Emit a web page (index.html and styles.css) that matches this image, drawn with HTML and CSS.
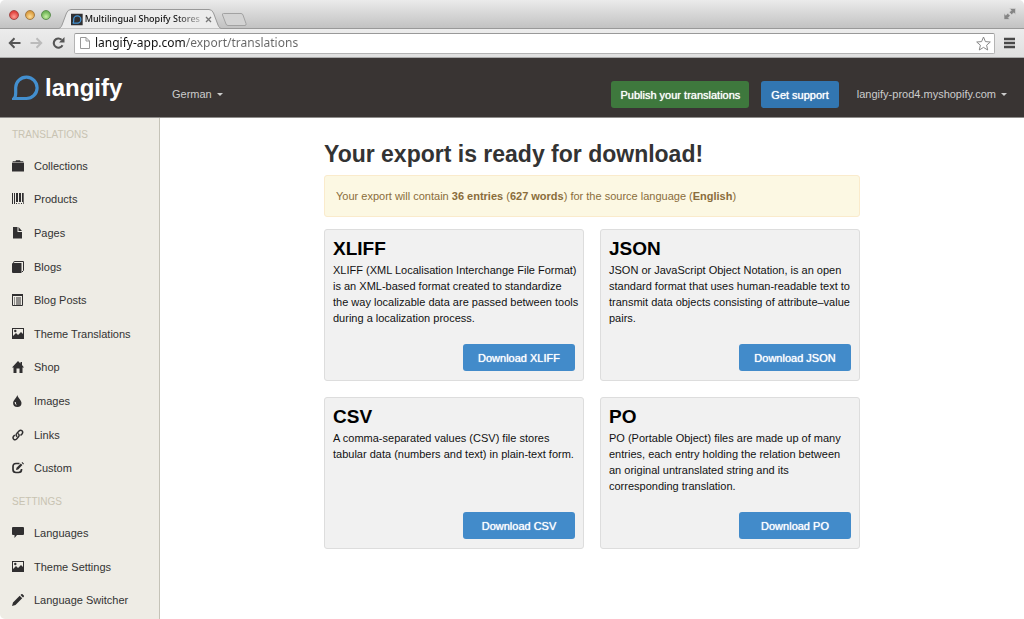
FILE: index.html
```html
<!DOCTYPE html>
<html lang="en">
<head>
<meta charset="utf-8">
<title>Multilingual Shopify Stores</title>
<link rel="stylesheet" href="styles.css">
</head>
<body>
<svg class="sprite" aria-hidden="true">
  <symbol id="i-image" viewBox="0 0 12 12"><path fill-rule="evenodd" d="M0 0h12v11H0zM1 1v7l3-3 2 2 3-3 2 2V1z"/><circle cx="3.300" cy="3" r="1.200"/></symbol>
</svg>
<div class="window">
  <div class="tabstrip">
    <div class="lights">
      <button class="light red" aria-label="Close"></button>
      <button class="light amber" aria-label="Minimize"></button>
      <button class="light green" aria-label="Zoom"></button>
    </div>
    <div class="tab">
      <svg class="tab-shape" viewBox="0 0 166 20" preserveAspectRatio="none"><path d="M0 20C3 19.500 4 18.500 5 16L9.500 4Q11 .5 14 .5H152Q155 .5 156.500 4L161 16C162 18.500 163 19.500 166 20Z" fill="#ececec" stroke="#999"/></svg>
      <svg class="favicon" viewBox="0 0 13 13"><path d="M0 0h13v13H0z" fill="#302f30"/><path d="M2 10.500Q3 10 3 8V6.500a4 4 0 1 1 4 4Z" fill="none" stroke="#4293d4" stroke-width="1.400"/></svg>
      <span class="tab-title">Multilingual Shopify Stores</span>
      <button class="tab-close" aria-label="Close tab"><svg viewBox="0 0 7 7"><path d="M1 1l5 5M6 1L1 6" stroke="#777" stroke-width="1.300"/></svg></button>
    </div>
    <button class="new-tab" aria-label="New tab"><svg viewBox="0 0 26 13"><path d="M2.500 .5H20Q21.500 .5 22 2L25 10.500Q25.500 12.500 24 12.500H7Q5.500 12.500 5 11L1.500 2Q1 .5 2.500 .5Z" fill="#d3d3d3" stroke="#a2a2a2"/></svg></button>
    <button class="expand" aria-label="Full screen"><svg viewBox="0 0 12 12"><path d="M5.500 .5h6v6L9.700 4.700 7.700 6.700 5.300 4.300 7.300 2.300zM6 11.500H0V5.500L1.800 7.300 3.800 5.300 6.200 7.700 4.200 9.700z" fill="#858585" stroke="#d6d6d6" stroke-width=".6"/></svg></button>
  </div>
  <div class="toolbar">
    <button class="tool" aria-label="Back"><svg viewBox="0 0 13 12"><path d="M12.500 6H2M6.500 1.300L1.800 6l4.700 4.700" fill="none" stroke="#555" stroke-width="2"/></svg></button>
    <button class="tool" aria-label="Forward"><svg viewBox="0 0 13 12"><path d="M.5 6H11M6.500 1.300L11.200 6l-4.700 4.700" fill="none" stroke="#bbb" stroke-width="2"/></svg></button>
    <button class="tool" aria-label="Reload"><svg viewBox="0 0 13 12"><path d="M10.500 8.200A4.600 4.600 0 1 1 9.600 2.800" fill="none" stroke="#555" stroke-width="2.100"/><path d="M12.500 0v5.500H7z" fill="#555"/></svg></button>
    <div class="omnibox">
      <svg class="page-icon" viewBox="0 0 10 12"><path d="M.5 .5h5.500l3.500 3.500v7.500H.5zM6 .5V4h3.500" fill="#fff" stroke="#999"/></svg>
      <input class="url" type="text" aria-label="Address" value="langify-app.com/export/translations">
      <button class="star" aria-label="Bookmark"><svg viewBox="0 0 15 15"><path d="M7.500 1l1.900 4.600 4.900.4-3.700 3.200 1.100 4.800-4.200-2.600L3.300 14l1.100-4.800L.7 6l4.900-.4z" fill="#fff" stroke="#888"/></svg></button>
    </div>
    <button class="menu" aria-label="Menu"><svg viewBox="0 0 11 12"><path d="M0 2h11M0 6h11M0 10h11" stroke="#484848" stroke-width="2.400"/></svg></button>
  </div>

  <header class="header">
    <a class="logo" href="#">
      <svg viewBox="0 0 27 26"><path d="M2 23.500Q3.700 22 3.700 18V12.500A10.700 10.700 0 1 1 14.400 23.500Z" fill="none" stroke="#438fcf" stroke-width="3.200"/></svg>
      <span>langify</span>
    </a>
    <button class="dropdown language">German <i class="caret"></i></button>
    <div class="header-actions">
      <a class="btn btn-green" href="#">Publish your translations</a>
      <a class="btn btn-blue" href="#">Get support</a>
      <button class="dropdown shop">langify-prod4.myshopify.com <i class="caret"></i></button>
    </div>
  </header>

  <div class="body">
    <nav class="sidebar">
      <h2>TRANSLATIONS</h2>
      <a href="#"><svg viewBox="0 0 12 12"><path d="M0 3h12v8.500H0zM0 2.400L1 1.300h2.500L4 .3h4l.5 1H11l1 1.100z"/></svg>Collections</a>
      <a href="#"><svg viewBox="0 0 12 12"><path d="M0 0h1v11H0zM2 0h1v11H2zM4 0h2v9H4zM7 0h2v9H7zM10 0h1v9h-1zM11.300 0h.7v11h-.7zM4 10h1v1H4zM6.500 10h1v1h-1zM9 10h1v1H9z"/></svg>Products</a>
      <a href="#"><svg viewBox="0 0 12 12"><path d="M1 0h4.500v5H10v6.500H1zM6.500 0L10 4H6.500z"/></svg>Pages</a>
      <a href="#"><svg viewBox="0 0 12 12"><path d="M1 2h8.500v10H1Q0 12 0 11V3Q0 2 1 2z"/><path d="M1 1.700Q2 .5 3 .5h8.500v9L10 11" fill="none" stroke="#302f30"/></svg>Blogs</a>
      <a href="#"><svg viewBox="0 0 12 12"><path d="M.5 .5h10v11H.5z" fill="none" stroke="#302f30"/><path d="M0 0h11v2H0zM2 3.500h1v1H2zM4 3.500h5v1H4zM2 5.500h1v1H2zM4 5.500h5v1H4zM2 7.500h1v1H2zM4 7.500h5v1H4zM2 9.500h1v1H2zM4 9.500h5v1H4z"/></svg>Blog Posts</a>
      <a href="#"><svg viewBox="0 0 12 12"><use href="#i-image"/></svg>Theme Translations</a>
      <a href="#"><svg viewBox="0 0 12 12"><path d="M6 0l2.500 2.500V1H10v3l2 2.500h-1.500V12h-3V7.500h-3V12h-3V6.500H0z"/></svg>Shop</a>
      <a href="#"><svg viewBox="0 0 12 12"><path fill-rule="evenodd" d="M5.300 0C5.800 3 9.500 5 9.500 8a4.200 4 0 0 1-8.400 0C1.100 5 4.800 3 5.300 0zM2.600 7Q2.500 9.800 5 10.500 3.800 9 3.800 7z"/></svg>Images</a>
      <a href="#"><svg viewBox="0 0 12 12"><g fill="none" stroke="#302f30" stroke-width="1.500"><path d="M5.200 7.800Q3.300 6 4.800 4.500L7 2Q8.600 .5 10 1.800T10 5L8.500 6.500"/><path d="M6 4.500Q8 6 6.500 7.800L4.600 10Q3 11.500 1.700 10.200T1.600 7.300L2.800 6"/></g></svg>Links</a>
      <a href="#"><svg viewBox="0 0 12 12"><path d="M7.500 1.500H4Q1 1.500 1 4.500v3Q1 10.500 4 10.500h2.500q3 0 3-3V7" fill="none" stroke="#302f30" stroke-width="1.700"/><path d="M4 8l.5-2.200L8.800 1.500l1.600 1.600-4.200 4.300zM9.600 .7l.7-.7 1.700 1.700-.8.8z"/></svg>Custom</a>
      <h2>SETTINGS</h2>
      <a href="#"><svg viewBox="0 0 12 12"><path d="M1 0h10q1 0 1 1v6q0 1-1 1H5L2.500 11V8H1Q0 8 0 7V1Q0 0 1 0z"/></svg>Languages</a>
      <a href="#"><svg viewBox="0 0 12 12"><use href="#i-image"/></svg>Theme Settings</a>
      <a href="#"><svg viewBox="0 0 12 12"><path d="M0 12l1-3.500L7.700 1.800l2.500 2.500L3.500 11zM8.500 1l.8-.8q.7-.5 1.300.1l1.200 1.200q.5.600 0 1.200l-.8.800z"/></svg>Language Switcher</a>
    </nav>
    <main class="main">
      <div class="content">
        <h1>Your export is ready for download!</h1>
        <p class="alert">Your export will contain <b>36 entries</b> (<b>627 words</b>) for the source language (<b>English</b>)</p>
        <div class="cards">
          <section class="card card-wide-text">
            <h3>XLIFF</h3>
            <p>XLIFF (XML Localisation Interchange File Format)<br>is an XML-based format created to standardize<br>the way localizable data are passed between tools<br>during a localization process.</p>
            <a class="download" href="#">Download XLIFF</a>
          </section>
          <section class="card">
            <h3>JSON</h3>
            <p>JSON or JavaScript Object Notation, is an open standard format that uses human-readable text to transmit data objects consisting of attribute–value pairs.</p>
            <a class="download" href="#">Download JSON</a>
          </section>
          <section class="card">
            <h3>CSV</h3>
            <p>A comma-separated values (CSV) file stores tabular data (numbers and text) in plain-text form.</p>
            <a class="download" href="#">Download CSV</a>
          </section>
          <section class="card">
            <h3>PO</h3>
            <p>PO (Portable Object) files are made up of many entries, each entry holding the relation between an original untranslated string and its corresponding translation.</p>
            <a class="download" href="#">Download PO</a>
          </section>
        </div>
      </div>
    </main>
  </div>
</div>
</body>
</html>
```

FILE: styles.css
```css
* { box-sizing: border-box; }
body { margin: 0; background: #fff; font: 11px/16px "Liberation Sans", Arial, sans-serif; color: #333; }
h1, h2, h3, p { margin: 0; }
a { color: inherit; text-decoration: none; }
button { display: flex; align-items: center; padding: 0; border: 0; background: none; font: inherit; color: inherit; cursor: pointer; }
svg { display: block; }
.sprite { position: absolute; width: 0; height: 0; }

.window { display: flex; flex-direction: column; min-height: 100vh; border-radius: 5px; overflow: hidden; }

/* Browser frame */
.tabstrip { display: flex; align-items: flex-end; height: 29px; padding: 0 8px 0 9px; background: linear-gradient(#ebebeb, #c2c2c2); border-bottom: 1px solid #999; }
.lights { display: flex; gap: 6px; align-self: center; padding-top: 2px; }
.light { width: 10px; height: 10px; border: 1px solid #806060; border-radius: 50%; }
.red { background: radial-gradient(circle at 50% 70%, #ff9d94, #e0413d 70%); border-color: #a44846; }
.amber { background: radial-gradient(circle at 50% 70%, #ffdd96, #d99b3e 70%); border-color: #a27a45; }
.green { background: radial-gradient(circle at 50% 70%, #c8f0a4, #6fb457 70%); border-color: #5d8f50; }
.tab { position: relative; display: flex; align-items: center; width: 166px; height: 20px; margin: 0 0 -1px 6px; padding: 0 11px 0 14px; }
.tab-shape { position: absolute; inset: 0; width: 100%; height: 100%; }
.favicon { position: relative; width: 13px; height: 13px; }
.tab-title { position: relative; flex: 1; margin: 0 5px 0 2px; white-space: nowrap; font: 500 9px/16px "Noto Sans", "Open Sans", sans-serif; color: #111; mask-image: linear-gradient(90deg, #000 78%, #0004); }
.tab-close { position: relative; }
.tab-close svg { width: 7px; height: 7px; }
.new-tab { margin-bottom: 2px; margin-left: -2px; }
.new-tab svg { width: 26px; height: 13px; }
.expand { align-self: center; margin-left: auto; }
.expand svg { width: 12px; height: 12px; }
.toolbar { display: flex; align-items: center; gap: 9px; height: 29px; padding: 0 9px 0 8px; background: linear-gradient(#ececec, #e0e0e0); border-bottom: 1px solid #aaa; }
.tool svg { width: 13px; height: 12px; }
.omnibox { display: flex; flex: 1; align-items: center; height: 21px; padding: 0 3px 0 5px; border: 1px solid #b4b4b4; border-top-color: #999; border-radius: 2px; background: #fff; }
.page-icon { width: 10px; height: 12px; }
.url { flex: 1; min-width: 0; height: 18px; margin-left: 5px; padding: 0; border: 0; outline: 0; font: 12px/18px "Noto Sans", "Open Sans", sans-serif; color: #222; background: linear-gradient(90deg, #111 90px, #666 90px) text; -webkit-text-fill-color: transparent; }
.star svg { width: 15px; height: 15px; }
.menu svg { width: 11px; height: 12px; }

/* Application header */
.header { display: flex; align-items: center; height: 60px; padding: 13px 17px 0 12px; background: #393433; border-bottom: 1px solid #8f8d8b; color: #ccc; }
.logo { display: flex; align-items: center; gap: 6px; width: 160px; padding-bottom: 12px; color: #fff; font-size: 24px; line-height: 28px; font-weight: bold; }
.logo svg { width: 27px; height: 26px; }
.dropdown { gap: 5px; white-space: nowrap; }
.caret { border: 3px solid transparent; border-top-color: currentColor; border-bottom: 0; }
.header-actions { display: flex; align-items: center; gap: 12px; margin-left: auto; }
.btn { padding: 6px 9px 5px; border-radius: 3px; color: #fff; white-space: nowrap; text-shadow: 0 0 1px #fff; }
.btn-green { background: #3e783d; }
.btn-blue { padding-left: 10px; padding-right: 10px; background: #3276b1; }
.shop { margin-left: 6px; }

/* Page body */
.body { display: flex; flex: 1; }
.sidebar { display: flex; flex-direction: column; width: 160px; padding-bottom: 2px; background: #eeece5; border-right: 1px solid #c5c3b8; }
.sidebar h2 { height: 31px; padding: 1px 0 0 12px; font-size: 10px; line-height: 31px; font-weight: normal; color: #c8c3b2; }
.sidebar a { display: flex; flex: 1 0 auto; align-items: center; gap: 10px; padding-left: 12px; color: #333; }
.sidebar svg { width: 12px; height: 12px; fill: #302f30; }
.main { flex: 1; padding: 20px 16px; }
.content { max-width: 536px; margin: 0 auto; }
h1 { font-size: 23px; line-height: 32px; }
.alert { margin: 5px 0 12px; padding: 12px 11px; border: 1px solid #faebcc; border-radius: 3px; background: #fcf8e3; color: #8a6d3b; }
.cards { display: grid; grid-template-columns: repeat(2, 1fr); gap: 16px; }
.card { display: flex; flex-direction: column; min-height: 152px; padding: 7px 8px 9px; border: 1px solid #ddd; border-radius: 3px; background: #f1f1f1; color: #111; }
.card h3 { margin-bottom: 1px; font-size: 19px; line-height: 24px; color: #000; }
.card-wide-text p { margin-right: -5px; }
.download { align-self: flex-end; width: 112px; margin-top: auto; padding: 6px 0 5px; border-radius: 3px; background: #428bca; color: #fff; text-align: center; text-shadow: 0 0 1px #fff; }
```
